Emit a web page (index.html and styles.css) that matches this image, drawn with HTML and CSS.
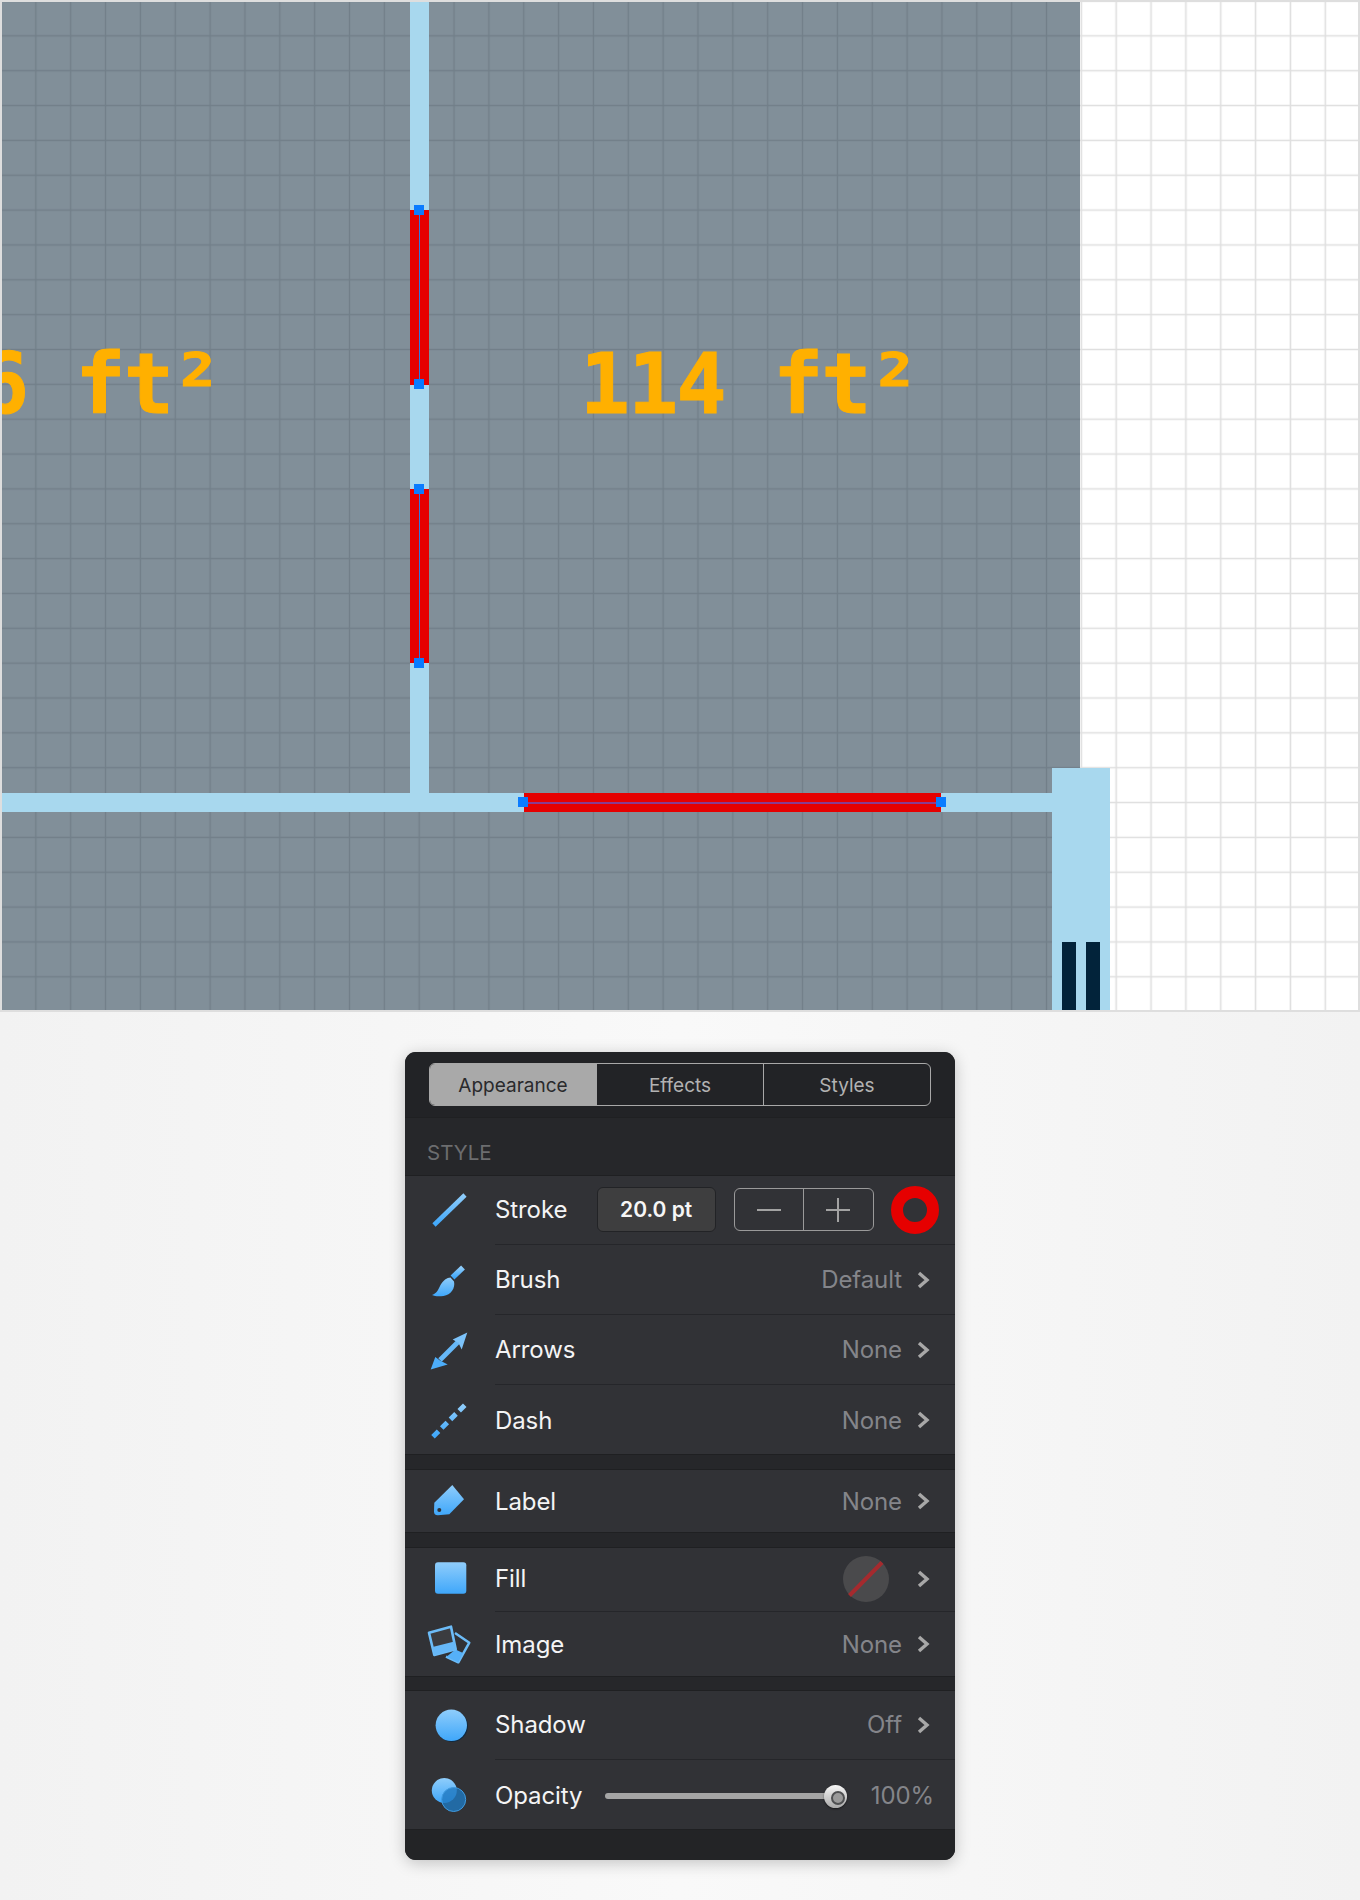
FILE: index.html
```html
<!DOCTYPE html>
<html lang="en">
<head>
<meta charset="utf-8">
<title>Floor plan appearance</title>
<link rel="stylesheet" href="styles.css">
</head>
<body>
<svg class="defs" width="0" height="0" aria-hidden="true">
  <defs>
    <linearGradient id="blue" x1="0" y1="0" x2="0" y2="1">
      <stop offset="0" stop-color="#8fcdfb"/>
      <stop offset="1" stop-color="#3fa7fa"/>
    </linearGradient>
  </defs>
</svg>

<section class="canvas">
  <svg class="grid" width="1360" height="1012" aria-hidden="true">
    <defs>
      <pattern id="gridLight" patternUnits="userSpaceOnUse" x="-16.425" y="-16.425" width="34.85" height="34.85">
        <path d="M17.425 0V34.85M0 17.425H34.85" stroke="#dfdfdf" stroke-width="1.6" fill="none"/>
      </pattern>
      <pattern id="gridDark" patternUnits="userSpaceOnUse" x="-16.425" y="-16.425" width="34.85" height="34.85">
        <path d="M17.425 0V34.85M0 17.425H34.85" stroke="#727f89" stroke-width="1.4" fill="none"/>
      </pattern>
    </defs>
    <rect width="1360" height="1012" fill="#ffffff"/>
    <rect width="1360" height="1012" fill="url(#gridLight)"/>
    <rect width="1080" height="1012" fill="#818f99"/>
    <rect width="1080" height="1012" fill="url(#gridDark)"/>
  </svg>

  <div class="wall wall-v"></div>
  <div class="wall wall-h"></div>
  <div class="wall wall-post"></div>
  <div class="door door-a"></div>
  <div class="door door-b"></div>

  <div class="opening opening-v opening-1"><i class="node node-start"></i><i class="node node-end"></i></div>
  <div class="opening opening-v opening-2"><i class="node node-start"></i><i class="node node-end"></i></div>
  <div class="opening opening-h"><i class="node node-start"></i><i class="node node-end"></i></div>

  <div class="area area-left">6 ft²</div>
  <div class="area area-right">114 ft²</div>
  <div class="frame"></div>
</section>

<main class="panel">
  <header class="panel-head">
    <nav class="tabs">
      <span class="tab tab-on">Appearance</span>
      <span class="tab">Effects</span>
      <span class="tab">Styles</span>
    </nav>
  </header>
  <div class="section-title">STYLE</div>

  <div class="group">
    <div class="row">
      <svg class="icon" viewBox="0 0 56 56"><path d="M12 43L43 13" stroke="url(#blue)" stroke-width="4.6" fill="none"/></svg>
      <div class="row-body">
        <span class="label">Stroke</span>
        <span class="field">20.0 pt</span>
        <span class="stepper">
          <span class="step"><svg width="24" height="24" viewBox="0 0 24 24"><path d="M0 12H24" class="step-mark"/></svg></span>
          <span class="step"><svg width="24" height="24" viewBox="0 0 24 24"><path d="M0 12H24M12 0V24" class="step-mark"/></svg></span>
        </span>
        <span class="ring"></span>
      </div>
    </div>
    <div class="row">
      <svg class="icon" viewBox="0 0 56 56">
        <path d="M10 43C15 41.500 16.500 37 18.500 33C21 28.500 25 25.500 28.500 25.500L32 29.500C33.500 36 29 43 21.500 44C17 44.500 13 44.500 10 43Z" fill="url(#blue)"/>
        <path d="M30.500 25.500L41 15.500" stroke="url(#blue)" stroke-width="5.500" fill="none"/>
      </svg>
      <div class="row-body"><span class="label">Brush</span><span class="value">Default</span>
        <svg class="chev" viewBox="0 0 13 18"><path d="M2 2L10 9L2 16"/></svg></div>
    </div>
    <div class="row">
      <svg class="icon" viewBox="0 0 56 56">
        <path d="M36 20L18 38" stroke="#66b8f8" stroke-width="4.800" fill="none"/>
        <path d="M45.300 10.500L39.700 27.500L36.500 21L30.700 17.500Z" fill="#7cc3fa"/>
        <path d="M8.700 47.500L13.300 35L18 38.500L25.700 42.500Z" fill="#4cadfa"/>
      </svg>
      <div class="row-body"><span class="label">Arrows</span><span class="value">None</span>
        <svg class="chev" viewBox="0 0 13 18"><path d="M2 2L10 9L2 16"/></svg></div>
    </div>
    <div class="row row-last">
      <svg class="icon" viewBox="0 0 56 56"><path d="M11 44.700L43 13" stroke="url(#blue)" stroke-width="5" stroke-dasharray="7.800 4.500" fill="none"/></svg>
      <div class="row-body"><span class="label">Dash</span><span class="value">None</span>
        <svg class="chev" viewBox="0 0 13 18"><path d="M2 2L10 9L2 16"/></svg></div>
    </div>
  </div>

  <div class="group">
    <div class="row row-short row-last">
      <svg class="icon" viewBox="0 0 56 56">
        <path d="M30.300 12L42 26.300L27.300 41.300L16 42.300Q12 42.500 12 38.500L12.300 29.700Z" fill="url(#blue)"/>
        <circle cx="17.300" cy="37" r="2" fill="#313236"/>
      </svg>
      <div class="row-body"><span class="label">Label</span><span class="value">None</span>
        <svg class="chev" viewBox="0 0 13 18"><path d="M2 2L10 9L2 16"/></svg></div>
    </div>
  </div>

  <div class="group">
    <div class="row row-fill">
      <svg class="icon" viewBox="0 0 56 56"><rect x="13" y="11.300" width="31.300" height="31.400" rx="3" fill="url(#blue)"/></svg>
      <div class="row-body"><span class="label">Fill</span>
        <svg class="swatch" width="46" height="46" viewBox="0 0 46 46"><circle cx="23" cy="23" r="23" fill="#4a4a4c"/><path d="M6.500 39.500L39 6.500" stroke="#a52a2e" stroke-width="4" fill="none"/></svg>
        <svg class="chev chev-fill" viewBox="0 0 13 18"><path d="M2 2L10 9L2 16"/></svg></div>
    </div>
    <div class="row row-image row-last">
      <svg class="icon" viewBox="0 0 56 56">
        <path d="M33 17L47.300 26.700L36.300 46.300L24 40.700" fill="#313236" stroke="#6cbcf8" stroke-width="2.500" stroke-linejoin="round"/>
        <path d="M24.500 40.800L36.300 46.300L41 37L33.500 33.500Z" fill="#55b0f8"/>
        <path d="M7 16.700L29 10.700L33.700 33.300L12.300 39Z" fill="#3b3c40" stroke="#6cbcf8" stroke-width="2.600" stroke-linejoin="round"/>
        <path d="M10.500 31L32.500 25.500L33.700 33.300L12.300 39Z" fill="#66b8f8"/>
      </svg>
      <div class="row-body"><span class="label">Image</span><span class="value">None</span>
        <svg class="chev" viewBox="0 0 13 18"><path d="M2 2L10 9L2 16"/></svg></div>
    </div>
  </div>

  <div class="group group-narrow">
    <div class="row">
      <svg class="icon" viewBox="0 0 56 56">
        <circle cx="30.200" cy="29.200" r="15.700" fill="#0e2a42"/>
        <circle cx="29.300" cy="28.300" r="15.700" fill="url(#blue)"/>
      </svg>
      <div class="row-body"><span class="label">Shadow</span><span class="value">Off</span>
        <svg class="chev" viewBox="0 0 13 18"><path d="M2 2L10 9L2 16"/></svg></div>
    </div>
    <div class="row row-last">
      <svg class="icon" viewBox="0 0 56 56">
        <circle cx="22.300" cy="23.500" r="12.500" fill="url(#blue)"/>
        <circle cx="31.700" cy="32.500" r="12" fill="#1f78c0" fill-opacity="0.8" stroke="#3f9be0" stroke-width="1"/>
      </svg>
      <div class="row-body"><span class="label">Opacity</span>
        <span class="slider"><span class="thumb"></span></span>
        <span class="percent">100%</span></div>
    </div>
  </div>
  <footer class="panel-foot"></footer>
</main>
</body>
</html>
```

FILE: styles.css
```css
* { box-sizing: border-box; }

html, body { margin: 0; padding: 0; }

body {
  width: 1360px;
  height: 1900px;
  overflow: hidden;
  background: linear-gradient(90deg, #f2f2f2 0%, #f9f9f9 50%, #f2f2f2 100%);
  font-family: "Inter", "Liberation Sans", sans-serif;
}

.defs { position: absolute; }

/* floor plan: a free canvas */
.canvas {
  position: relative;
  height: 1012px;
  overflow: hidden;
}

.grid { position: absolute; left: 0; top: 0; display: block; }

.frame {
  position: absolute;
  inset: 0;
  border: 2px solid #dedede;
}

.wall { position: absolute; background: #a8d8ee; }
.wall-v { left: 409.500px; top: 0; width: 19.500px; height: 800px; }
.wall-h { left: 0; top: 793px; width: 1060px; height: 19.300px; }
.wall-post { left: 1052px; top: 767.500px; width: 58px; height: 244px; }

.door { position: absolute; top: 941.500px; width: 14.700px; height: 70px; background: #02233a; }
.door-a { left: 1061.500px; }
.door-b { left: 1085.700px; }

.opening { position: absolute; background: #e60000; }
.opening-v { left: 409.500px; width: 19.500px; }
.opening-1 { top: 210px; height: 174.500px; }
.opening-2 { top: 488.500px; height: 174.500px; }
.opening-h { left: 524px; top: 793px; width: 417px; height: 19.300px; }

.opening-v::before {
  content: "";
  position: absolute;
  left: 9px;
  top: 0;
  bottom: 0;
  width: 1.500px;
  background: #2f7be0;
}
.opening-h::before {
  content: "";
  position: absolute;
  left: 0;
  right: 0;
  top: 8.500px;
  height: 2px;
  background: #8a3b8e;
}

.node { position: absolute; width: 10px; height: 10px; background: #0a7cff; }
.opening-v .node { left: 4.750px; }
.opening-v .node-start { top: -5px; }
.opening-v .node-end { bottom: -4.500px; }
.opening-h .node { top: 4.250px; }
.opening-h .node-start { left: -6px; }
.opening-h .node-end { right: -5px; }

.area {
  position: absolute;
  top: 335px;
  font-family: "DejaVu Sans Mono", monospace;
  font-weight: 700;
  font-size: 83px;
  line-height: 100px;
  letter-spacing: -1.670px;
  color: #ffb000;
  -webkit-text-stroke: 1px #ffb000;
  white-space: pre;
}
.area-left { left: -21px; }
.area-right { left: 580px; }

/* panel */
.panel {
  width: 550px;
  height: 808px;
  margin: 40px 0 0 405px;
  border-radius: 11px;
  overflow: hidden;
  background: #26272a;
  box-shadow: 0 3px 16px rgba(0, 0, 0, 0.22);
}

.panel-head {
  height: 66px;
  padding: 11px 24px 0;
  background: #222326;
  border-bottom: 1px solid #1f2022;
}

.tabs {
  display: flex;
  width: 502px;
  height: 43px;
  border: 1.500px solid #a8a8a8;
  border-radius: 6px;
  overflow: hidden;
}

.tab {
  flex: 1;
  display: flex;
  align-items: center;
  justify-content: center;
  padding-top: 1px;
  font-size: 19px;
  color: #b2b2b2;
  border-left: 1.500px solid #a8a8a8;
}
.tab:first-child { border-left: 0; }
.tab-on { background: #a9a9a9; color: #2a2a2c; }

.section-title {
  height: 57px;
  padding: 22px 0 0 22px;
  font-size: 20.500px;
  line-height: 26px;
  color: #6c6d6f;
}

.group {
  background: #313236;
  box-shadow: inset 0 1px #1f2022, inset 0 -1px #1f2022;
  margin-bottom: 14px;
}
.group-narrow { margin-top: -1px; margin-bottom: 0; }

.row { display: flex; height: 70px; }
.row-short { height: 64px; }
.row-fill { height: 64.500px; }
.row-image { height: 65.500px; }

.icon {
  flex: none;
  width: 56px;
  height: 56px;
  margin: auto 17px;
  overflow: visible;
}

.row-body {
  flex: 1;
  display: flex;
  align-items: center;
  padding: 0 25px 0 0;
  border-bottom: 1px solid #25262a;
}
.row-last .row-body { border-bottom: 0; }

.label { font-size: 24px; letter-spacing: -0.100px; color: #f4f4f5; }

.value {
  margin-left: auto;
  font-size: 24px;
  letter-spacing: -0.100px;
  color: #84858a;
}

.chev { flex: none; width: 13px; height: 18px; margin-left: 15px; }
.chev path { fill: none; stroke: #a8a8a8; stroke-width: 3.400px; }
.chev-fill { margin-left: 28px; }

.field {
  width: 119px;
  height: 45px;
  margin-left: auto;
  display: flex;
  align-items: center;
  justify-content: center;
  background: #3e3e3f;
  border: 1px solid #222326;
  border-radius: 6px;
  font-size: 21px;
  font-weight: 600;
  color: #f6f6f6;
}

.stepper {
  display: flex;
  width: 140px;
  height: 43px;
  margin-left: 18px;
  border: 1.500px solid #9a9a9a;
  border-radius: 6px;
}
.step { flex: 1; display: flex; align-items: center; justify-content: center; }
.step + .step { border-left: 1.500px solid #9a9a9a; }
.step-mark { fill: none; stroke: #a3a3a3; stroke-width: 2; }

.ring {
  flex: none;
  width: 48px;
  height: 48px;
  margin: 0 -8.700px 0 17px;
  border: 12.500px solid #e60000;
  border-radius: 50%;
}

.swatch { flex: none; margin-left: auto; }

.slider {
  position: relative;
  width: 242px;
  height: 6px;
  margin: 2px 0 0 23px;
  border-radius: 3px;
  background: #a5a5a5;
}

.thumb {
  position: absolute;
  right: 0;
  top: -8.500px;
  width: 23px;
  height: 23px;
  border-radius: 50%;
  background: linear-gradient(#f7f7f7, #a9a9a9);
  box-shadow: 0 1px 2px rgba(0, 0, 0, 0.5);
}
.thumb::after {
  content: "";
  position: absolute;
  left: 6.500px;
  top: 6.500px;
  width: 10px;
  height: 10px;
  border-radius: 50%;
  background: #9a9a9a;
  border: 2px solid #4f5052;
}

.percent {
  margin-left: auto;
  margin-right: -4px;
  font-size: 24px;
  letter-spacing: -0.100px;
  color: #84858a;
}

.panel-foot { height: 31px; background: #232426; }
```
